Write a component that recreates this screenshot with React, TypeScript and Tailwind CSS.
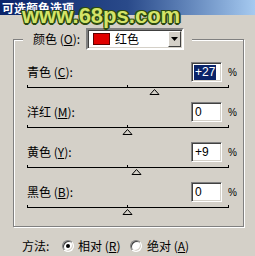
import React from "react";

const rows = [
  { name: "青色", key: "C", value: "+27", pos: 27, selected: true },
  { name: "洋红", key: "M", value: "0", pos: 0, selected: false },
  { name: "黄色", key: "Y", value: "+9", pos: 9, selected: false },
  { name: "黑色", key: "B", value: "0", pos: 0, selected: false },
];

const cjk = "font-['SimSun','Noto_Sans_CJK_SC',sans-serif]";

const Slider = ({ pos }: { pos: number }) => {
  const cx = 100.5 + pos;
  return (
    <svg width="202" height="11" className="mt-[3px] block">
      <rect x="0" y="2" width="202" height="1" fill="#000" />
      <rect x="0" y="0" width="1" height="3" fill="#000" />
      <rect x="100" y="0" width="1" height="3" fill="#000" />
      <rect x="201" y="0" width="1" height="3" fill="#000" />
      <polygon
        points={`${cx},4.5 ${cx - 4.5},9.5 ${cx + 4.5},9.5`}
        fill="#d4d0c8"
        stroke="#000"
        strokeWidth="1"
      />
    </svg>
  );
};

const Radio = ({ checked }: { checked: boolean }) => (
  <span className="w-[12px] h-[12px] rounded-full bg-white border border-t-[#808080] border-l-[#808080] border-b-white border-r-white shadow-[inset_1px_1px_0_#404040,inset_-1px_-1px_0_#d4d0c8] flex items-center justify-center">
    {checked && <span className="w-[4px] h-[4px] rounded-full bg-black" />}
  </span>
);

const App = () => {
  return (
    <div className={`w-[255px] h-[256px] bg-[#d4d0c8] relative overflow-hidden text-[12px] text-black ${cjk}`}>
      {/* title bar */}
      <div className="h-[15px] bg-gradient-to-r from-[#0a246a] via-[#2a4a8a] to-[#a6caf0] text-white font-bold text-[12px] leading-[15px] pl-[2px]">
        可选颜色选项
      </div>

      <fieldset className="ml-[13px] mt-[13px] w-[231px] h-[199px] border border-[#808080] shadow-[inset_1px_1px_0_#fff,1px_1px_0_#fff] p-0 m-0">
        <legend className="ml-[9px] pl-[10px] pr-[8px] bg-[#d4d0c8] flex items-center h-[22px]">
          <span className="w-[53px]">
            颜色 (<u>O</u>):
          </span>
          <div className="w-[98px] h-[22px] bg-white border-2 border-t-[#808080] border-l-[#808080] border-b-white border-r-white shadow-[inset_1px_1px_0_#404040,inset_-1px_-1px_0_#d4d0c8] flex items-center pl-[5px] pr-[1px]">
            <span className="w-[17px] h-[12px] bg-[#e00000] border border-[#600000]" />
            <span className="ml-[5px] flex-1">红色</span>
            <span className="w-[13px] h-[16px] bg-[#d4d0c8] border border-t-white border-l-white border-b-[#404040] border-r-[#404040] flex items-center justify-center">
              <svg width="7" height="4">
                <polygon points="0,0 7,0 3.5,4" fill="#000" />
              </svg>
            </span>
          </div>
        </legend>

        <div className="pl-[13px] pt-[12px]">
          {rows.map((r) => (
            <div key={r.key} className="h-[40px] w-[208px]">
              <div className="flex items-center h-[20px]">
                <span className="flex-1">
                  {r.name} (<u>{r.key}</u>):
                </span>
                <span className="w-[31px] h-[20px] bg-white border border-t-[#808080] border-l-[#808080] border-b-white border-r-white shadow-[inset_1px_1px_0_#404040,inset_-1px_-1px_0_#d4d0c8] flex items-center pl-[2px] font-['Liberation_Sans',sans-serif] text-[12px]">
                  {r.selected ? (
                    <span className="bg-[#0a246a] text-white px-[1px] leading-[15px]">{r.value}</span>
                  ) : (
                    <span className="px-[1px]">{r.value}</span>
                  )}
                </span>
                <span className="ml-[6px] w-[7px] text-[10px] font-['Liberation_Sans',sans-serif]">%</span>
              </div>
              <Slider pos={r.pos} />
            </div>
          ))}
        </div>
      </fieldset>

      <div className="flex items-center h-[14px] mt-[12px] pl-[22px]">
        <span className="w-[40px]">方法:</span>
        <Radio checked />
        <span className="ml-[4px] w-[52px]">
          相对 (<u>R</u>)
        </span>
        <Radio checked={false} />
        <span className="ml-[5px]">
          绝对 (<u>A</u>)
        </span>
      </div>

      {/* watermark */}
      <div className="absolute left-[22px] top-[5px] text-[22px] leading-[22px] font-bold font-['Liberation_Sans',sans-serif] text-[#d4e468] [text-shadow:1px_1px_0_#2c4a12,-1px_-1px_0_#2c4a12,1px_-1px_0_#2c4a12,-1px_1px_0_#2c4a12,0_2px_0_#2c4a12,2px_0_0_#2c4a12]">
        www.68ps.com
      </div>
    </div>
  );
};

export default App;
